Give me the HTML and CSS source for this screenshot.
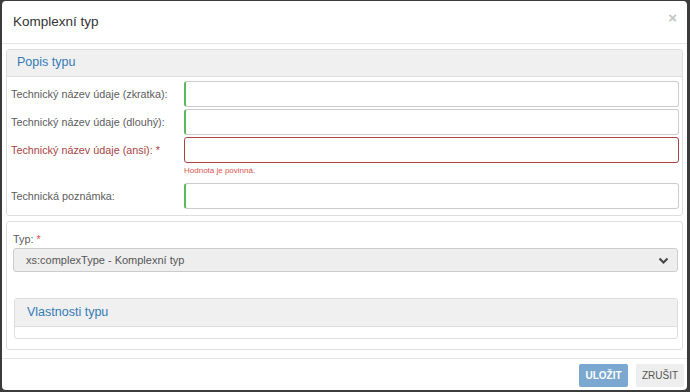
FILE: index.html
```html
<!DOCTYPE html>
<html lang="cs">
<head>
  <meta charset="UTF-8">
  <title>Komplexní typ</title>
  <link rel="stylesheet" href="styles.css">
</head>
<body>

  <div class="modal">
    <div class="modal-header">
      <h4 class="modal-title">Komplexní typ</h4>
      <span class="close">&times;</span>
    </div>

    <div class="modal-body">
      <div class="panel">
        <div class="panel-heading">Popis typu</div>
        <div class="panel-body form-grid">
          <label class="label">Technický název údaje (zkratka):</label>
          <input type="text" class="input valid">

          <label class="label">Technický název údaje (dlouhý):</label>
          <input type="text" class="input valid">

          <label class="label error">Technický název údaje (ansi): *</label>
          <div class="field">
            <input type="text" class="input invalid">
            <div class="help">Hodnota je povinná.</div>
          </div>

          <label class="label">Technická poznámka:</label>
          <input type="text" class="input valid">
        </div>
      </div>

      <div class="panel">
        <div class="panel-body type-body">
          <label class="label type-label">Typ: <span class="req">*</span></label>
          <div class="select">
            <span>xs:complexType - Komplexní typ</span>
            <svg width="11" height="7" viewBox="0 0 11 7"><path d="M1.5 1.5 L5.5 5.5 L9.5 1.5" fill="none" stroke="#444" stroke-width="2"/></svg>
          </div>

          <div class="panel inner">
            <div class="panel-heading">Vlastnosti typu</div>
            <div class="panel-body empty"></div>
          </div>
        </div>
      </div>
    </div>

    <div class="modal-footer">
      <button class="btn btn-primary">ULOŽIT</button>
      <button class="btn btn-default">ZRUŠIT</button>
    </div>
  </div>

</body>
</html>
```

FILE: styles.css
```css
body {
  margin: 0;
  background-color: #3b3b3b;
  font-family: "Liberation Sans", Arial, sans-serif;
  width: 690px;
  height: 392px;
  overflow: hidden;
}

.modal {
  margin: 1px 3px 0 2px;
  height: 389px;
  background-color: #fff;
  border-radius: 4px;
  display: flex;
  flex-direction: column;
}

.modal > * {
  flex-shrink: 0;
}

.modal-header {
  height: 41px;
  border-bottom: 1px solid #e5e5e5;
  display: flex;
  align-items: center;
  justify-content: space-between;
  padding: 0 10px 1px 11px;
}

.modal-title {
  margin: 0;
  font-size: 13.5px;
  font-weight: normal;
  color: #333;
}

.close {
  color: #c4c4c4;
  font-size: 15px;
  font-weight: bold;
  margin-top: -8px;
}

.modal-body {
  padding: 5px 4px 0 4px;
  display: flex;
  flex-direction: column;
  gap: 5px;
}

.panel {
  border: 1px solid #ddd;
  border-radius: 3px;
}

.panel-heading {
  background-color: #f0f0f0;
  border-bottom: 1px solid #ddd;
  height: 26px;
  line-height: 25px;
  padding-left: 10px;
  font-size: 12.5px;
  color: #337ab7;
  border-radius: 3px 3px 0 0;
}

.form-grid {
  display: grid;
  grid-template-columns: 173px 1fr;
  row-gap: 2px;
  align-items: start;
  padding: 4px 3px 6px 4px;
}

.label {
  font-size: 10.8px;
  color: #5c5c5c;
  line-height: 26px;
}

.label.error {
  color: #a94442;
}

.input {
  display: block;
  width: 100%;
  height: 26px;
  box-sizing: border-box;
  border: 1px solid #ccc;
  border-radius: 3px;
  margin: 0;
  padding: 0 6px;
}

.input.valid {
  border-left: 2px solid #5cb85c;
}

.input.invalid {
  border-color: #a94442;
}

.help {
  font-size: 8px;
  color: #d9534f;
  margin: 3px 0 5px;
  line-height: 10px;
}

.type-body {
  padding: 10px 4px 10px 6px;
}

.type-label {
  display: block;
  line-height: 14px;
  margin-bottom: 2px;
}

.req {
  color: #d9534f;
}

.select {
  height: 24px;
  box-sizing: border-box;
  background-color: #eee;
  border: 1px solid #ccc;
  border-radius: 3px;
  display: flex;
  align-items: center;
  justify-content: space-between;
  padding: 0 8px 0 12px;
  font-size: 11px;
  color: #555;
}

.inner {
  margin-top: 26px;
  margin-left: 1px;
}

.inner .panel-heading {
  height: 27px;
  line-height: 26px;
  padding-left: 12px;
}

.empty {
  height: 11px;
}

.modal-footer {
  border-top: 1px solid #e5e5e5;
  margin-top: auto;
  padding: 5px 3px 0 0;
  height: 26px;
  display: flex;
  justify-content: flex-end;
  align-items: flex-start;
  gap: 8px;
}

.btn {
  height: 23px;
  border: none;
  border-radius: 2px;
  font-family: "Liberation Sans", Arial, sans-serif;
  font-size: 10px;
  padding: 0;
  cursor: pointer;
}

.btn-primary {
  width: 49px;
  background-color: #7aa8d0;
  color: #fff;
  font-weight: bold;
}

.btn-default {
  width: 48px;
  background-color: #eee;
  color: #555;
}
```
